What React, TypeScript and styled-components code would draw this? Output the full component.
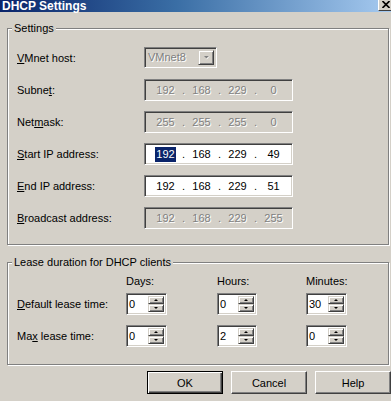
import React from 'react';
import styled, { createGlobalStyle, css } from 'styled-components';

const GlobalStyle = createGlobalStyle`
  html, body {
    margin: 0;
    padding: 0;
    background: #d4d0c8;
  }
  body {
    font-family: "Liberation Sans", Arial, sans-serif;
    font-size: 11px;
    color: #000;
  }
`;

const Window = styled.div`
  width: 391px;
  height: 401px;
  overflow: hidden;
  background: #d4d0c8;
  display: flex;
  flex-direction: column;
`;

const TitleBar = styled.div`
  height: 12px;
  flex: none;
  display: flex;
  justify-content: space-between;
  align-items: flex-start;
  background: linear-gradient(to right, #0a246a 0%, #3a6ea5 45%, #a6caf0 100%);
`;

const Title = styled.span`
  color: #fff;
  font-weight: bold;
  font-size: 12px;
  line-height: 12px;
  padding-left: 2px;
  white-space: nowrap;
`;

const CloseButton = styled.div`
  width: 13px;
  height: 11px;
  box-sizing: border-box;
  background: #d4d0c8;
  border-left: 1px solid #fff;
  border-bottom: 1px solid #404040;
  display: flex;
  align-items: flex-start;
  padding: 1px 0 0 3px;
`;

const Content = styled.div`
  padding: 0 0 0 7px;
  display: flex;
  flex-direction: column;
`;

const Group = styled.fieldset<{ $top: number }>`
  margin: ${p => p.$top}px 2px 0 0;
  padding: 0;
  min-width: 0;
  border: 1px solid #808080;
  box-shadow: inset 1px 1px #fff, 1px 1px #fff;
`;

const Legend = styled.legend`
  margin-left: 4px;
  padding: 0 2px;
  line-height: 13px;
  background: #d4d0c8;
`;

const SettingsBody = styled.div`
  padding: 12px 0 16px 9px;
  display: flex;
  flex-direction: column;
  gap: 11px;
`;

const Row = styled.div`
  display: flex;
  align-items: center;
  height: 21px;
`;

const Label = styled.span`
  width: 127px;
  flex: none;
  white-space: nowrap;
`;

const sunken = css`
  box-sizing: border-box;
  border-style: solid;
  border-width: 1px;
  border-color: #808080 #fff #fff #808080;
  box-shadow: inset 1px 1px #404040, inset -1px -1px #d4d0c8;
`;

const raised = css`
  box-sizing: border-box;
  background: #d4d0c8;
  border-style: solid;
  border-width: 1px;
  border-color: #d4d0c8 #404040 #404040 #d4d0c8;
  box-shadow: inset 1px 1px #fff, inset -1px -1px #808080;
`;

const Combo = styled.div`
  ${sunken};
  width: 73px;
  height: 21px;
  background: #d4d0c8;
  display: flex;
  align-items: stretch;
  padding: 2px;
`;

const ComboText = styled.span`
  flex: 1;
  color: #808080;
  text-shadow: 1px 1px #fff;
  line-height: 15px;
  padding-left: 1px;
`;

const ComboButton = styled.div`
  ${raised};
  width: 16px;
  display: flex;
  align-items: center;
  justify-content: center;
`;

const IpBox = styled.div<{ $disabled?: boolean }>`
  ${sunken};
  width: 149px;
  height: 22px;
  display: flex;
  align-items: center;
  padding-left: 4px;
  background: ${p => (p.$disabled ? '#d4d0c8' : '#fff')};
  color: ${p => (p.$disabled ? '#808080' : '#000')};
  text-shadow: ${p => (p.$disabled ? '1px 1px #fff' : 'none')};
`;

const Octet = styled.span`
  width: 33px;
  text-align: center;
`;

const Dot = styled.span`
  width: 3px;
  text-align: center;
`;

const Selected = styled.span`
  background: #0a246a;
  color: #fff;
  padding: 1px 1px 2px;
`;

const LeaseTable = styled.div`
  display: grid;
  grid-template-columns: 109px 41px 50px 40px 49px 41px;
  row-gap: 10px;
  align-items: center;
  padding: 6px 0 17px 9px;
`;

const ColHead = styled.span`
  margin-bottom: -5px;
  line-height: 13px;
  padding-left: 0;
  white-space: nowrap;
`;

const Spin = styled.div`
  ${sunken};
  height: 22px;
  display: flex;
  padding: 2px;
  background: #fff;
`;

const SpinText = styled.span`
  flex: 1;
  line-height: 16px;
`;

const SpinButtons = styled.div`
  width: 16px;
  display: flex;
  flex-direction: column;
`;

const SpinButton = styled.div<{ $down?: boolean }>`
  ${raised};
  flex: 1;
  display: flex;
  align-items: center;
  justify-content: center;
  &::after {
    content: '';
    border-left: 2px solid transparent;
    border-right: 2px solid transparent;
    ${p =>
      p.$down
        ? css`border-top: 2px solid #000;`
        : css`border-bottom: 2px solid #000;`}
  }
`;

const ButtonRow = styled.div`
  display: flex;
  justify-content: flex-end;
  gap: 8px;
  margin-top: 6px;
`;

const Button = styled.button<{ $default?: boolean }>`
  width: 76px;
  height: 23px;
  box-sizing: border-box;
  font: inherit;
  color: #000;
  background: #d4d0c8;
  padding: 0;
  border: 1px solid;
  border-color: #fff #404040 #404040 #fff;
  box-shadow: inset -1px -1px #808080;
  ${p =>
    p.$default &&
    css`
      border-color: #000;
      box-shadow: inset 1px 1px #fff, inset -1px -1px #404040, inset -2px -2px #808080;
    `}
`;

type Ip = { parts: string[]; disabled?: boolean; selectFirst?: boolean };

const IpField: React.FC<Ip> = ({ parts, disabled, selectFirst }) => (
  <IpBox $disabled={disabled}>
    {parts.map((p, i) => (
      <React.Fragment key={i}>
        {i > 0 && <Dot>.</Dot>}
        <Octet>{i === 0 && selectFirst ? <Selected>{p}</Selected> : p}</Octet>
      </React.Fragment>
    ))}
  </IpBox>
);

const Spinner: React.FC<{ value: string }> = ({ value }) => (
  <Spin>
    <SpinText>{value}</SpinText>
    <SpinButtons>
      <SpinButton />
      <SpinButton $down />
    </SpinButtons>
  </Spin>
);

const App: React.FC = () => {
  return (
    <Window>
      <GlobalStyle />
      <TitleBar>
        <Title>DHCP Settings</Title>
        <CloseButton>
          <svg width="8" height="7" viewBox="0 0 8 7">
            <path d="M0.5 0 L7.5 7 M7.5 0 L0.5 7" stroke="#000" strokeWidth="1.6" />
          </svg>
        </CloseButton>
      </TitleBar>
      <Content>
        <Group $top={10}>
          <Legend>Settings</Legend>
          <SettingsBody>
            <Row>
              <Label><u>V</u>Mnet host:</Label>
              <Combo>
                <ComboText>VMnet8</ComboText>
                <ComboButton>
                  <svg width="7" height="5" viewBox="0 0 7 5">
                    <path d="M1 1 L6 1 L3.5 3.5 Z" fill="#808080" />
                    <path d="M6 1.5 L3.5 4.2" stroke="#fff" strokeWidth="1" />
                  </svg>
                </ComboButton>
              </Combo>
            </Row>
            <Row>
              <Label>Subne<u>t</u>:</Label>
              <IpField parts={['192', '168', '229', '0']} disabled />
            </Row>
            <Row>
              <Label>Net<u>m</u>ask:</Label>
              <IpField parts={['255', '255', '255', '0']} disabled />
            </Row>
            <Row>
              <Label><u>S</u>tart IP address:</Label>
              <IpField parts={['192', '168', '229', '49']} selectFirst />
            </Row>
            <Row>
              <Label><u>E</u>nd IP address:</Label>
              <IpField parts={['192', '168', '229', '51']} />
            </Row>
            <Row>
              <Label><u>B</u>roadcast address:</Label>
              <IpField parts={['192', '168', '229', '255']} disabled />
            </Row>
          </SettingsBody>
        </Group>
        <Group $top={11}>
          <Legend>Lease duration for DHCP clients</Legend>
          <LeaseTable>
            <span />
            <ColHead>Days:</ColHead>
            <span />
            <ColHead>Hours:</ColHead>
            <span />
            <ColHead>Minutes:</ColHead>

            <Label><u>D</u>efault lease time:</Label>
            <Spinner value="0" />
            <span />
            <Spinner value="0" />
            <span />
            <Spinner value="30" />

            <Label>Ma<u>x</u> lease time:</Label>
            <Spinner value="0" />
            <span />
            <Spinner value="2" />
            <span />
            <Spinner value="0" />
          </LeaseTable>
        </Group>
        <ButtonRow>
          <Button $default>OK</Button>
          <Button>Cancel</Button>
          <Button>Help</Button>
        </ButtonRow>
      </Content>
    </Window>
  );
};

export default App;
